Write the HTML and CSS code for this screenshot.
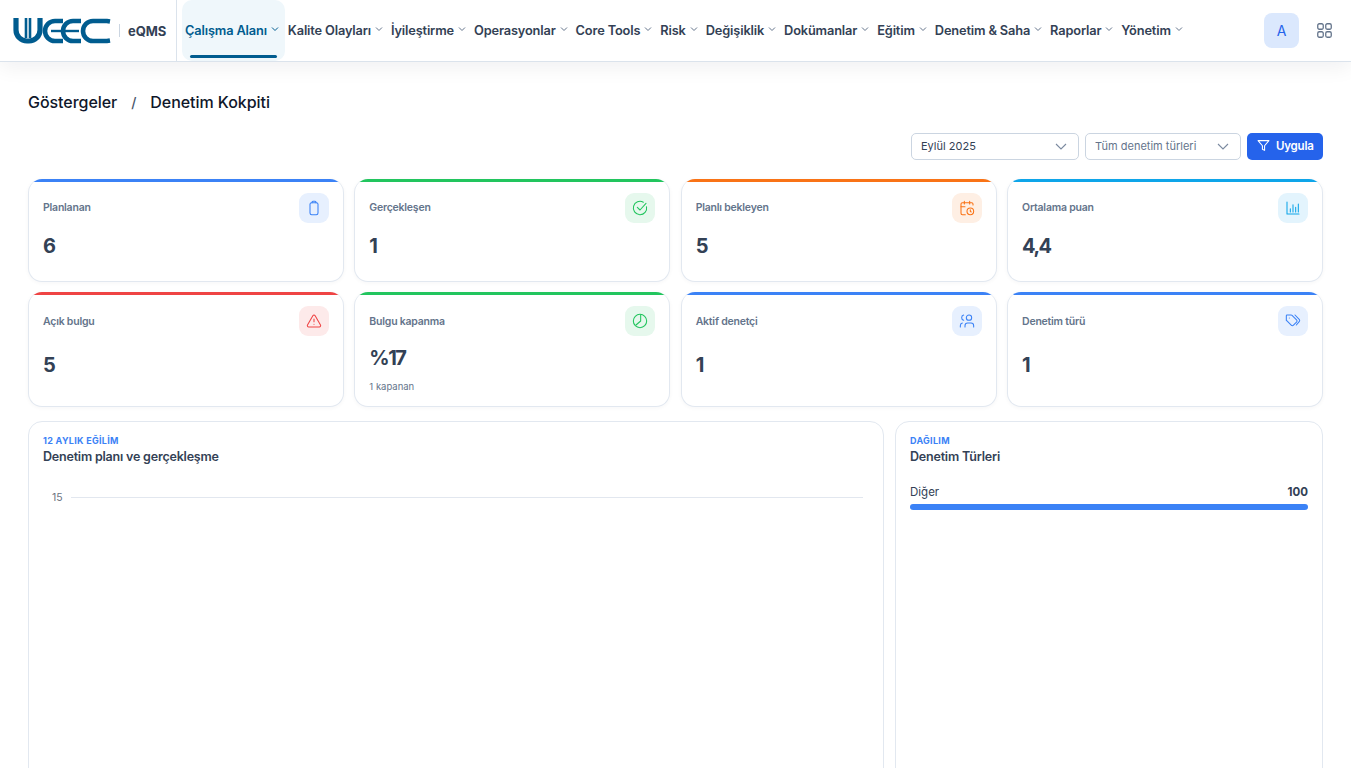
FILE: index.html
```html
<!DOCTYPE html>
<html lang="tr">
<head>
<meta charset="UTF-8">
<meta name="viewport" content="width=device-width, initial-scale=1.0">
<title>Denetim Kokpiti</title>
<link rel="stylesheet" href="styles.css">
</head>
<body>
<header class="topbar">
    <div class="brand">
        <svg class="logo" viewBox="0 0 98 26" fill="none" stroke="#005c8f">
            <path stroke-width="5.2" d="M3 0V12a11 11 0 0 0 11 11h2a11 11 0 0 0 11-11V0"/>
            <path stroke-width="2.6" d="M13 0V20M17 0V20"/>
            <path stroke-width="4.6" d="M50 3H42a10 10 0 0 0 0 20H50"/>
            <path stroke-width="2.4" d="M38 13H66"/>
            <path stroke-width="4.6" d="M68 3H60a10 10 0 0 0 0 20H68"/>
            <path stroke-width="4.6" d="M97 3.500L94 3H80a10 10 0 0 0 0 20H94L97 22.500"/>
        </svg>
        <span class="brand-sep"></span>
        <span class="brand-name">eQMS</span>
    </div>
    <nav class="nav">
        <a class="nav-item active">Çalışma Alanı <svg class="caret" viewBox="0 0 8 8"><path d="M1 2.5l3 3 3-3"/></svg></a>
        <a class="nav-item">Kalite Olayları <svg class="caret" viewBox="0 0 8 8"><path d="M1 2.5l3 3 3-3"/></svg></a>
        <a class="nav-item">İyileştirme <svg class="caret" viewBox="0 0 8 8"><path d="M1 2.5l3 3 3-3"/></svg></a>
        <a class="nav-item">Operasyonlar <svg class="caret" viewBox="0 0 8 8"><path d="M1 2.5l3 3 3-3"/></svg></a>
        <a class="nav-item">Core Tools <svg class="caret" viewBox="0 0 8 8"><path d="M1 2.5l3 3 3-3"/></svg></a>
        <a class="nav-item">Risk <svg class="caret" viewBox="0 0 8 8"><path d="M1 2.5l3 3 3-3"/></svg></a>
        <a class="nav-item">Değişiklik <svg class="caret" viewBox="0 0 8 8"><path d="M1 2.5l3 3 3-3"/></svg></a>
        <a class="nav-item">Dokümanlar <svg class="caret" viewBox="0 0 8 8"><path d="M1 2.5l3 3 3-3"/></svg></a>
        <a class="nav-item">Eğitim <svg class="caret" viewBox="0 0 8 8"><path d="M1 2.5l3 3 3-3"/></svg></a>
        <a class="nav-item">Denetim &amp; Saha <svg class="caret" viewBox="0 0 8 8"><path d="M1 2.5l3 3 3-3"/></svg></a>
        <a class="nav-item">Raporlar <svg class="caret" viewBox="0 0 8 8"><path d="M1 2.5l3 3 3-3"/></svg></a>
        <a class="nav-item">Yönetim <svg class="caret" viewBox="0 0 8 8"><path d="M1 2.5l3 3 3-3"/></svg></a>
    </nav>
    <div class="topbar-right">
        <div class="avatar">A</div>
        <svg class="apps" viewBox="0 0 15 15"><rect x="0.75" y="0.75" width="5.5" height="5.5" rx="1.5"/><rect x="8.75" y="0.75" width="5.5" height="5.5" rx="1.5"/><rect x="0.75" y="8.75" width="5.5" height="5.5" rx="1.5"/><rect x="8.75" y="8.75" width="5.5" height="5.5" rx="1.5"/></svg>
    </div>
</header>

<main class="page">
    <div class="breadcrumb">
        <span>Göstergeler</span>
        <span class="crumb-sep">/</span>
        <span>Denetim Kokpiti</span>
    </div>

    <div class="filters">
        <div class="select select-month">Eylül 2025 <svg class="select-caret" viewBox="0 0 12 7"><path d="M1 1l5 5 5-5"/></svg></div>
        <div class="select select-type">Tüm denetim türleri <svg class="select-caret" viewBox="0 0 12 7"><path d="M1 1l5 5 5-5"/></svg></div>
        <button class="apply">
            <svg viewBox="0 0 24 24"><polygon points="22 3 2 3 10 12.46 10 19 14 21 14 12.46 22 3"/></svg>
            Uygula
        </button>
    </div>

    <section class="cards">
        <div class="card blue">
            <div class="card-head">
                <span class="card-label">Planlanan</span>
                <span class="card-icon"><svg viewBox="0 0 24 24"><rect x="6" y="4" width="12" height="18" rx="2.5"/><path d="M9 4V3.500A1.500 1.500 0 0 1 10.500 2h3A1.500 1.500 0 0 1 15 3.500V4"/></svg></span>
            </div>
            <div class="card-body"><div class="card-value">6</div></div>
        </div>
        <div class="card green">
            <div class="card-head">
                <span class="card-label">Gerçekleşen</span>
                <span class="card-icon"><svg viewBox="0 0 24 24"><path d="M21.800 10A10 10 0 1 1 17 3.340"/><path d="M8 11l4 4L21 5"/></svg></span>
            </div>
            <div class="card-body"><div class="card-value">1</div></div>
        </div>
        <div class="card orange">
            <div class="card-head">
                <span class="card-label">Planlı bekleyen</span>
                <span class="card-icon"><svg viewBox="0 0 24 24"><path d="M21 7.500V6a2 2 0 0 0-2-2H5a2 2 0 0 0-2 2v14a2 2 0 0 0 2 2h4.500"/><path d="M16 2v4M8 2v4M3 10h6"/><circle cx="17" cy="17" r="5"/><path d="M17 14.500V17l1.300 1"/></svg></span>
            </div>
            <div class="card-body"><div class="card-value">5</div></div>
        </div>
        <div class="card sky">
            <div class="card-head">
                <span class="card-label">Ortalama puan</span>
                <span class="card-icon"><svg viewBox="0 0 24 24"><path d="M3 3v18h18"/><path d="M8 18v-5M12 18V7M16 18v-7M20 18V6"/></svg></span>
            </div>
            <div class="card-body"><div class="card-value">4,4</div></div>
        </div>
        <div class="card red">
            <div class="card-head">
                <span class="card-label">Açık bulgu</span>
                <span class="card-icon"><svg viewBox="0 0 24 24"><path d="M21.730 18l-8-14a2 2 0 0 0-3.480 0l-8 14A2 2 0 0 0 4 21h16a2 2 0 0 0 1.730-3z"/><path d="M12 9v4M12 17h.01"/></svg></span>
            </div>
            <div class="card-body"><div class="card-value">5</div></div>
        </div>
        <div class="card green">
            <div class="card-head">
                <span class="card-label">Bulgu kapanma</span>
                <span class="card-icon"><svg viewBox="0 0 24 24"><circle cx="12" cy="12" r="10"/><path d="M13 2.500V12l-7 6"/></svg></span>
            </div>
            <div class="card-body with-sub">
                <div class="card-value">%17</div>
                <div class="card-sub">1 kapanan</div>
            </div>
        </div>
        <div class="card blue">
            <div class="card-head">
                <span class="card-label">Aktif denetçi</span>
                <span class="card-icon"><svg viewBox="0 0 24 24"><path d="M9 21v-2a4 4 0 0 1 4-4h5a4 4 0 0 1 4 4v2"/><circle cx="15" cy="7" r="4"/><path d="M2 21v-2a4 4 0 0 1 3-3.870M7 3.130a4 4 0 0 0 0 7.750"/></svg></span>
            </div>
            <div class="card-body"><div class="card-value">1</div></div>
        </div>
        <div class="card blue">
            <div class="card-head">
                <span class="card-label">Denetim türü</span>
                <span class="card-icon"><svg viewBox="0 0 24 24"><path d="M2 4a1 1 0 0 1 1-1h6.200a2 2 0 0 1 1.400.600l6.700 6.700a2.400 2.400 0 0 1 0 3.400l-4.600 4.600a2.400 2.400 0 0 1-3.400 0l-6.700-6.700A2 2 0 0 1 2 11.200z"/><path d="M15 3l6.300 6.500a2.400 2.400 0 0 1 0 3.400L17 18"/><path d="M6.500 7.500h.01"/></svg></span>
            </div>
            <div class="card-body"><div class="card-value">1</div></div>
        </div>
    </section>

    <section class="panels">
        <div class="panel">
            <div class="eyebrow">12 AYLIK EĞİLİM</div>
            <h3 class="panel-title">Denetim planı ve gerçekleşme</h3>
            <div class="chart-row">
                <span class="chart-tick">15</span>
                <span class="chart-line"></span>
            </div>
        </div>
        <div class="panel">
            <div class="eyebrow">DAĞILIM</div>
            <h3 class="panel-title">Denetim Türleri</h3>
            <div class="dist-row">
                <span>Diğer</span>
                <strong>100</strong>
            </div>
            <div class="dist-bar"></div>
        </div>
    </section>
</main>
</body>
</html>
```

FILE: styles.css
```css
html {
    overflow: hidden;
    background: #fff;
}

body {
    margin: 0;
    width: 1351px;
    height: 768px;
    overflow: hidden;
    background: #fff;
    font-family: "Inter", "Liberation Sans", sans-serif;
    color: #1e293b;
}

/* top bar */
.topbar {
    display: flex;
    align-items: stretch;
    height: 61px;
    background: #fff;
    border-bottom: 1px solid #dbe3ec;
    box-shadow: 0 6px 20px rgba(15, 23, 42, 0.06);
}

.brand {
    display: flex;
    align-items: center;
    width: 177px;
    flex-shrink: 0;
    padding-left: 13px;
    box-sizing: border-box;
    border-right: 1px solid #dbe3ec;
}

.logo {
    width: 98px;
    height: 26px;
    margin-top: 1px;
}

.brand-sep {
    width: 1px;
    height: 13px;
    margin: 0 8px 0 8px;
    background: #cbd5e1;
}

.brand-name {
    font-size: 13px;
    font-weight: 700;
    letter-spacing: -0.1px;
    color: #334155;
}

.nav {
    display: flex;
    align-items: stretch;
    margin-left: 5px;
}

.nav-item {
    position: relative;
    display: flex;
    align-items: center;
    gap: 4px;
    padding: 0 5px 1px 3px;
    font-size: 12.800px;
    font-weight: 600;
    letter-spacing: -0.15px;
    white-space: nowrap;
    color: #334155;
}

.nav-item.active {
    padding-right: 6px;
    background: #eff7fb;
    border-radius: 10px;
    color: #005c8f;
}

.nav-item.active::after {
    content: "";
    position: absolute;
    left: 8px;
    right: 8px;
    bottom: 3px;
    height: 3px;
    border-radius: 2px;
    background: #005c8f;
}

.caret {
    width: 8px;
    height: 8px;
    margin-top: -3px;
    fill: none;
    stroke: #64748b;
    stroke-width: 1;
}

.active .caret {
    stroke: #005c8f;
}

.topbar-right {
    display: flex;
    align-items: center;
    gap: 18px;
    margin-left: auto;
    padding-right: 19px;
}

.avatar {
    display: flex;
    align-items: center;
    justify-content: center;
    width: 35px;
    height: 35px;
    border-radius: 8px;
    background: #dbe8fd;
    color: #2563eb;
    font-size: 14px;
}

.apps {
    width: 15px;
    height: 15px;
    fill: none;
    stroke: #64748b;
    stroke-width: 1.300;
}

/* page */
.page {
    padding: 0 28px;
}

.breadcrumb {
    display: flex;
    align-items: center;
    gap: 14px;
    height: 24px;
    padding-top: 28px;
    font-size: 16px;
    font-weight: 500;
    letter-spacing: -0.05px;
    color: #0f172a;
}

.crumb-sep {
    font-size: 14px;
    color: #475569;
}

.filters {
    display: flex;
    justify-content: flex-end;
    gap: 6px;
    margin-top: 19px;
}

.select {
    display: flex;
    align-items: center;
    justify-content: space-between;
    height: 27px;
    padding: 0 11px 2px 9px;
    box-sizing: border-box;
    background: #fff;
    border: 1px solid #cbd5e1;
    border-radius: 5px;
    font-size: 11px;
    color: #334155;
}

.select-month {
    width: 168px;
}

.select-type {
    width: 156px;
    color: #64748b;
}

.select-caret {
    width: 12px;
    height: 7px;
    margin-top: 2px;
    fill: none;
    stroke: #7b8aa0;
    stroke-width: 1.100;
}

.apply {
    display: flex;
    align-items: center;
    gap: 6px;
    width: 76px;
    height: 27px;
    padding: 0 0 2px 10px;
    border: 0;
    border-radius: 5px;
    background: #2563eb;
    color: #fff;
    font-family: inherit;
    font-size: 11.500px;
    font-weight: 600;
    letter-spacing: -0.2px;
}

.apply svg {
    width: 13px;
    height: 13px;
    fill: none;
    stroke: #fff;
    stroke-width: 2;
    stroke-linejoin: round;
}

/* stat cards */
.cards {
    display: grid;
    grid-template-columns: repeat(4, 1fr);
    grid-template-rows: 103px 115px;
    gap: 10.400px;
    margin-top: 19px;
}

.card {
    position: relative;
    display: flex;
    flex-direction: column;
    padding: 14px 14px 13px;
    box-sizing: border-box;
    overflow: hidden;
    background: #fff;
    border: 1px solid #e2e8f0;
    border-top: 0;
    border-radius: 14px;
    box-shadow: 0 1px 4px rgba(15, 23, 42, 0.04);
}

.card::before {
    content: "";
    position: absolute;
    top: 0;
    left: 0;
    right: 0;
    height: 3px;
    background: var(--tone);
}

.blue { --tone: #3b82f6; --tint: #e7f0fe; }
.green { --tone: #22c55e; --tint: #e6f8ed; }
.orange { --tone: #f97316; --tint: #feefe4; }
.sky { --tone: #0ea5e9; --tint: #e3f4fd; }
.red { --tone: #ef4444; --tint: #fdeaea; }

.card-head {
    display: flex;
    align-items: center;
    justify-content: space-between;
}

.card-label {
    font-size: 10.500px;
    font-weight: 600;
    letter-spacing: -0.22px;
    color: #64748b;
}

.card-icon {
    display: flex;
    align-items: center;
    justify-content: center;
    width: 30px;
    height: 29.500px;
    border-radius: 9px;
    background: var(--tint);
}

.card-icon svg {
    width: 16px;
    height: 16px;
    fill: none;
    stroke: var(--tone);
    stroke-width: 1.600;
    stroke-linecap: round;
    stroke-linejoin: round;
}

.card-body {
    display: flex;
    flex: 1;
    flex-direction: column;
    justify-content: center;
    padding-top: 1px;
}

.card-body.with-sub {
    justify-content: flex-end;
}

.card-value {
    font-size: 20px;
    font-weight: 700;
    line-height: 24px;
    letter-spacing: -1.500px;
    color: #334155;
}

.card-sub {
    margin-top: 11px;
    font-size: 9.500px;
    line-height: 12px;
    color: #64748b;
}

/* bottom panels */
.panels {
    display: grid;
    grid-template-columns: 2fr 1fr;
    gap: 11px;
    margin-top: 13.600px;
}

.panel {
    min-height: 500px;
    padding: 14px;
    box-sizing: border-box;
    background: #fff;
    border: 1px solid #e2e8f0;
    border-radius: 14px;
}

.eyebrow {
    font-size: 9px;
    font-weight: 700;
    line-height: 10px;
    letter-spacing: 0.3px;
    color: #3b82f6;
}

.panel-title {
    margin: 2px 0 0;
    font-size: 12.500px;
    font-weight: 600;
    line-height: 18px;
    letter-spacing: -0.2px;
    color: #334155;
}

.chart-row {
    display: flex;
    align-items: center;
    gap: 8px;
    margin: 25px 6px 0 9px;
}

.chart-tick {
    font-size: 10.500px;
    color: #6b7280;
}

.chart-line {
    flex: 1;
    height: 1px;
    background: #e2e7ef;
}

.dist-row {
    display: flex;
    justify-content: space-between;
    align-items: center;
    margin-top: 19px;
    font-size: 11.500px;
    line-height: 14px;
    color: #334155;
}

.dist-bar {
    height: 6px;
    margin-top: 5px;
    border-radius: 3px;
    background: #3b82f6;
}
```
